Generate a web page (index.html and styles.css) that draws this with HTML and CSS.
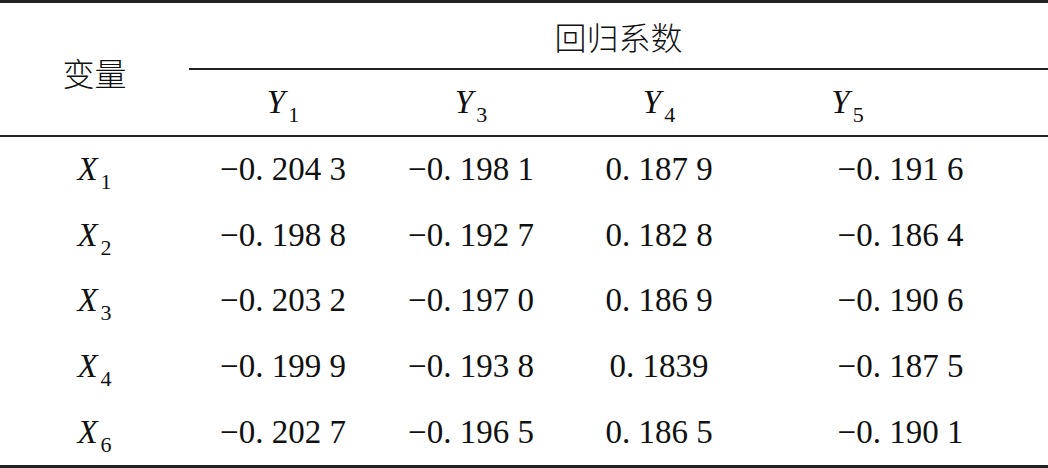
FILE: index.html
```html
<!DOCTYPE html>
<html>
<head>
  <meta charset="utf-8">
  <title>回归系数</title>
  <link rel="stylesheet" href="styles.css">
</head>
<body>
  <table class="coef-table">
    <colgroup>
      <col class="col-var">
      <col class="col-num">
      <col class="col-num">
      <col class="col-num">
      <col class="col-last">
    </colgroup>
    <thead>
      <tr class="head-top">
        <th rowspan="2" class="cjk var">变量</th>
        <th colspan="4" class="cjk group">回归系数</th>
      </tr>
      <tr class="head-sub">
        <th><i>Y</i><sub>1</sub></th>
        <th><i>Y</i><sub>3</sub></th>
        <th><i>Y</i><sub>4</sub></th>
        <th class="shift"><i>Y</i><sub>5</sub></th>
      </tr>
    </thead>
    <tbody>
      <tr>
        <td><i>X</i><sub>1</sub></td>
        <td>&minus;0. 204 3</td>
        <td>&minus;0. 198 1</td>
        <td>0. 187 9</td>
        <td>&minus;0. 191 6</td>
      </tr>
      <tr>
        <td><i>X</i><sub>2</sub></td>
        <td>&minus;0. 198 8</td>
        <td>&minus;0. 192 7</td>
        <td>0. 182 8</td>
        <td>&minus;0. 186 4</td>
      </tr>
      <tr>
        <td><i>X</i><sub>3</sub></td>
        <td>&minus;0. 203 2</td>
        <td>&minus;0. 197 0</td>
        <td>0. 186 9</td>
        <td>&minus;0. 190 6</td>
      </tr>
      <tr>
        <td><i>X</i><sub>4</sub></td>
        <td>&minus;0. 199 9</td>
        <td>&minus;0. 193 8</td>
        <td>0. 1839</td>
        <td>&minus;0. 187 5</td>
      </tr>
      <tr>
        <td><i>X</i><sub>6</sub></td>
        <td>&minus;0. 202 7</td>
        <td>&minus;0. 196 5</td>
        <td>0. 186 5</td>
        <td>&minus;0. 190 1</td>
      </tr>
    </tbody>
  </table>
</body>
</html>
```

FILE: styles.css
```css
body {
  margin: 0;
  background: #fff;
  color: #111;
  font-family: "Liberation Serif", serif;
}
.coef-table {
  width: 1048px;
  border-collapse: collapse;
  table-layout: fixed;
  border-top: 3px solid #222;
  border-bottom: 4px solid #222;
  font-size: 33px;
}
.col-var { width: 189px; }
.col-num { width: 188px; }
.col-last { width: 295px; }
th, td {
  padding: 0;
  text-align: center;
  font-weight: normal;
  white-space: nowrap;
  line-height: 1;
}
.cjk {
  font-family: "Noto Sans CJK SC", sans-serif;
  font-size: 32px;
  font-weight: 300;
}
.head-top th { height: 65px; }
.head-top th.group { border-bottom: 2px solid #222; }
.head-top th.var {
  border-bottom: 2px solid #222;
  padding-top: 6px;
}
.head-sub th {
  height: 65px;
  border-bottom: 2px solid #222;
}
.head-sub th.shift { padding-right: 106px; }
tbody td { height: 65.6px; }
i {
  font-style: italic;
}
sub {
  font-size: 22px;
  vertical-align: -9px;
  margin-left: 3px;
  line-height: 0;
}
```
